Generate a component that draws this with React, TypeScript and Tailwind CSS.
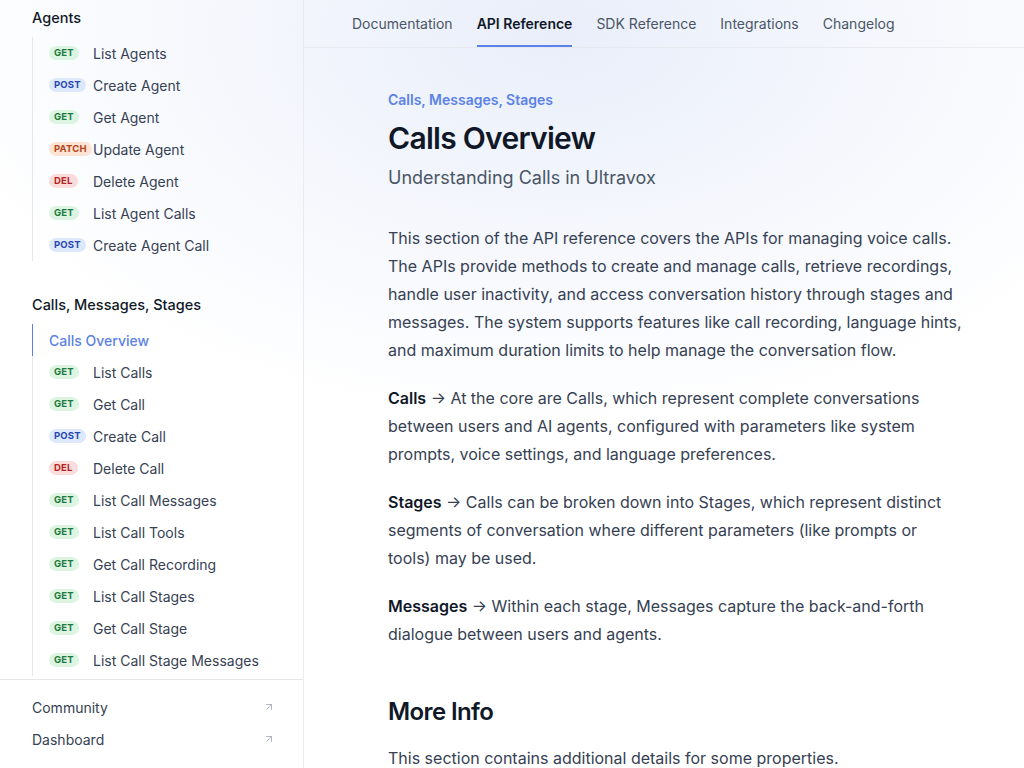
import { ArrowUpRight } from 'lucide-react';

type Method = 'GET' | 'POST' | 'PATCH' | 'DEL';

interface NavItem {
  method?: Method;
  label: string;
  active?: boolean;
}

const agentItems: NavItem[] = [
  { method: 'GET', label: 'List Agents' },
  { method: 'POST', label: 'Create Agent' },
  { method: 'GET', label: 'Get Agent' },
  { method: 'PATCH', label: 'Update Agent' },
  { method: 'DEL', label: 'Delete Agent' },
  { method: 'GET', label: 'List Agent Calls' },
  { method: 'POST', label: 'Create Agent Call' },
];

const callItems: NavItem[] = [
  { label: 'Calls Overview', active: true },
  { method: 'GET', label: 'List Calls' },
  { method: 'GET', label: 'Get Call' },
  { method: 'POST', label: 'Create Call' },
  { method: 'DEL', label: 'Delete Call' },
  { method: 'GET', label: 'List Call Messages' },
  { method: 'GET', label: 'List Call Tools' },
  { method: 'GET', label: 'Get Call Recording' },
  { method: 'GET', label: 'List Call Stages' },
  { method: 'GET', label: 'Get Call Stage' },
  { method: 'GET', label: 'List Call Stage Messages' },
];

const methodStyles: Record<Method, string> = {
  GET: 'bg-[#dcf5e3] text-[#1f7a3f]',
  POST: 'bg-[#dde8fb] text-[#2748b0]',
  PATCH: 'bg-[#fde3d3] text-[#b0461a]',
  DEL: 'bg-[#fbdcdc] text-[#b32424]',
};

const tabs = ['Documentation', 'API Reference', 'SDK Reference', 'Integrations', 'Changelog'];

function MethodBadge({ method }: { method: Method }) {
  return (
    <span
      className={`inline-flex h-[14px] items-center rounded-full px-[5px] text-[9.5px] font-bold leading-none tracking-[0.02em] ${methodStyles[method]}`}
    >
      {method}
    </span>
  );
}

function SidebarGroup({ title, items, first }: { title: string; items: NavItem[]; first?: boolean }) {
  return (
    <div className={first ? 'pt-[8px]' : 'pt-[34px]'}>
      <div className="mb-[9px] h-[20px] text-[14.5px] font-medium leading-[20px] text-gray-900">{title}</div>
      <div className="border-l border-gray-200">
        {items.map((item) =>
          item.active ? (
            <div
              key={item.label}
              className="-ml-px flex h-[32px] items-center border-l-[1.5px] border-[#5b82e6] pl-[16px] text-[14px] font-medium text-[#5b82e6]"
            >
              {item.label}
            </div>
          ) : (
            <div key={item.label} className="flex h-[32px] items-center pl-[16px] text-[14px] text-gray-700">
              <span className="flex w-[44px] flex-none">
                {item.method && <MethodBadge method={item.method} />}
              </span>
              <span>{item.label}</span>
            </div>
          )
        )}
      </div>
    </div>
  );
}

export default function App() {
  return (
    <div
      className="flex h-[768px] w-full overflow-hidden bg-white bg-[radial-gradient(ellipse_640px_400px_at_560px_30px,#e9eefa_0%,#f3f6fc_45%,#ffffff_100%)]"
      style={{ fontFamily: 'Inter, "Noto Sans", sans-serif' }}
    >
      {/* Sidebar */}
      <aside className="flex w-[304px] flex-none flex-col border-r border-gray-200/80">
        <div className="h-[679px] flex-none overflow-hidden pl-[32px] pr-[24px]">
          <SidebarGroup title="Agents" items={agentItems} first />
          <SidebarGroup title="Calls, Messages, Stages" items={callItems} />
        </div>
        <div className="flex-1 border-t border-gray-200 pt-[11px] pl-[32px] pr-[28px]">
          {['Community', 'Dashboard'].map((label) => (
            <div key={label} className="flex h-[32px] items-center justify-between text-[14px] text-gray-700">
              <span>{label}</span>
              <ArrowUpRight className="h-[12px] w-[12px] text-gray-400" strokeWidth={1.5} />
            </div>
          ))}
        </div>
      </aside>

      {/* Main */}
      <div className="flex min-w-0 flex-1 flex-col">
        <nav className="flex h-[48px] flex-none items-stretch gap-[24px] border-b border-gray-200/70 pl-[48px]">
          {tabs.map((tab) => {
            const active = tab === 'API Reference';
            return (
              <div
                key={tab}
                className={`flex items-center border-b-2 pt-[1px] text-[14px] ${
                  active ? 'border-[#5b82e6] font-semibold text-gray-900' : 'border-transparent text-gray-600'
                }`}
              >
                {tab}
              </div>
            );
          })}
        </nav>

        <main className="pl-[84px] pt-[40px]">
          <div className="w-[574px]">
            <div className="text-[14px] font-semibold leading-[24px] text-[#5b82e6]">Calls, Messages, Stages</div>
            <h1 className="mt-[6px] text-[30px] font-semibold leading-[40px] tracking-[-0.024em] text-gray-900">
              Calls Overview
            </h1>
            <p className="mt-[6px] text-[18px] leading-[28px] text-gray-600">Understanding Calls in Ultravox</p>

            <div className="mt-[32px] space-y-[20px] text-[16px] leading-[28px] text-gray-700">
              <p>
                This section of the API reference covers the APIs for managing voice calls. The APIs provide methods to
                create and manage calls, retrieve recordings, handle user inactivity, and access conversation history
                through stages and messages. The system supports features like call recording, language hints, and
                maximum duration limits to help manage the conversation flow.
              </p>
              <p>
                <strong className="font-semibold text-gray-900">Calls</strong> → At the core are Calls, which represent
                complete conversations between users and AI agents, configured with parameters like system prompts,
                voice settings, and language preferences.
              </p>
              <p>
                <strong className="font-semibold text-gray-900">Stages</strong> → Calls can be broken down into Stages,
                which represent distinct segments of conversation where different parameters (like prompts or tools)
                may be used.
              </p>
              <p>
                <strong className="font-semibold text-gray-900">Messages</strong> → Within each stage, Messages capture
                the back-and-forth dialogue between users and agents.
              </p>
            </div>

            <h2 className="mt-[48px] text-[24px] font-semibold leading-[32px] tracking-[-0.025em] text-gray-900">
              More Info
            </h2>
            <p className="mt-[16px] text-[16px] leading-[28px] text-gray-700">
              This section contains additional details for some properties.
            </p>
          </div>
        </main>
      </div>
    </div>
  );
}
